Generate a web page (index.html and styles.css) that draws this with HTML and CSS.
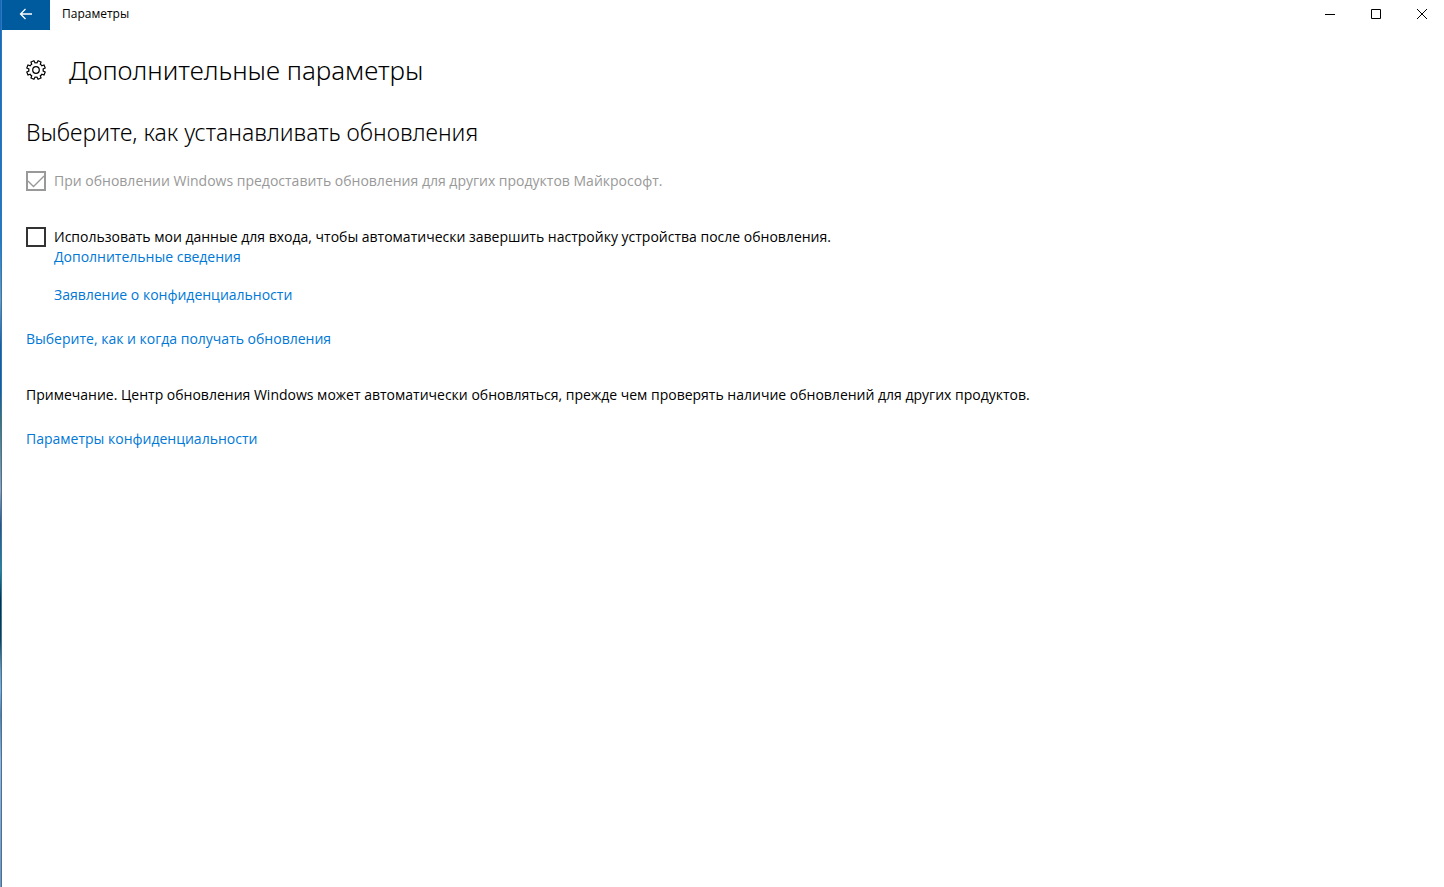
FILE: index.html
```html
<!DOCTYPE html>
<html lang="ru">
<head>
<meta charset="utf-8">
<title>Параметры</title>
<link rel="stylesheet" href="styles.css">
</head>
<body>
<div class="window">
  <header class="titlebar">
    <button class="back" aria-label="Назад">
      <svg width="14" height="12" viewBox="0 0 14 12"><path d="M13 6H1.5M6.5 1L1.500 6l5 5"/></svg>
    </button>
    <span class="app-name">Параметры</span>
    <div class="controls">
      <button aria-label="Свернуть"><svg width="10" height="10" viewBox="0 0 10 10"><path d="M0 5.500H10"/></svg></button>
      <button aria-label="Развернуть"><svg width="10" height="10" viewBox="0 0 10 10"><path d="M.5.5h9v9h-9z"/></svg></button>
      <button aria-label="Закрыть"><svg width="10" height="10" viewBox="0 0 10 10"><path d="M0 0L10 10M10 0L0 10"/></svg></button>
    </div>
  </header>
  <main class="content">
    <div class="page-head">
      <svg class="gear" width="20" height="20" viewBox="-10 -10 20 20"><path d="M-1-7.100Q0-7.400 1-7.100L2.100-9.200 5-8 4.300-5.800Q5.200-5.200 5.800-4.300L8-5 9.200-2.100 7.100-1Q7.400 0 7.100 1L9.200 2.100 8 5 5.800 4.300Q5.200 5.200 4.300 5.800L5 8 2.100 9.200 1 7.100Q0 7.400-1 7.100L-2.100 9.200-5 8-4.300 5.800Q-5.200 5.200-5.800 4.300L-8 5-9.200 2.100-7.100 1Q-7.400 0-7.100-1L-9.200-2.100-8-5-5.800-4.300Q-5.200-5.200-4.300-5.800L-5-8-2.100-9.200Z"/><circle r="3.300"/></svg>
      <h1>Дополнительные параметры</h1>
    </div>
    <h2>Выберите, как устанавливать обновления</h2>
    <label class="option disabled"><input type="checkbox" checked disabled><span>При обновлении Windows предоставить обновления для других продуктов Майкрософт.</span></label>
    <label class="option"><input type="checkbox"><span>Использовать мои данные для входа, чтобы автоматически завершить настройку устройства после обновления.</span></label>
    <div class="sublinks">
      <a href="#">Дополнительные сведения</a>
      <a href="#">Заявление о конфиденциальности</a>
    </div>
    <a class="delivery" href="#">Выберите, как и когда получать обновления</a>
    <p>Примечание. Центр обновления Windows может автоматически обновляться, прежде чем проверять наличие обновлений для других продуктов.</p>
    <a href="#">Параметры конфиденциальности</a>
  </main>
</div>
</body>
</html>
```
FILE: styles.css
```css
* { box-sizing: border-box; }
body {
  margin: 0;
  padding-left: 1px;
  min-height: 100vh;
  background: linear-gradient(#1c66b4 0, #2878bd 240px, #8298a3 300px, #285b91 345px, #24588b 390px, #596d45 420px, #b99c88 490px, #454c60 525px, #348578 570px, #172d20 600px, #293f29 640px, #8d958b 670px, #9eabb6 690px, #77777c 715px, #b5afb2 760px, #958d91 887px);
  color: #000;
  font-family: "Open Sans", "Noto Sans", sans-serif;
  font-size: 14px;
  line-height: 20px;
}
.window {
  min-height: 100vh;
  border-left: 1px solid #2779c4;
  background: #fff;
}
button { border: 0; padding: 0; background: none; display: grid; place-items: center; }
svg { fill: none; stroke: currentColor; }
.titlebar { display: flex; height: 30px; }
.back { width: 48px; height: 30px; padding-bottom: 2px; background: #005a9e; color: #fff; }
.back svg { stroke-width: 1.3; }
.app-name { margin-left: 12px; font-size: 12px; line-height: 28px; }
.controls { display: flex; margin-left: auto; }
.controls button { width: 46px; height: 28px; padding-left: 2px; color: #000; }
.content { padding: 20px 24px; }
.page-head { display: flex; align-items: center; gap: 23px; height: 40px; }
.gear { stroke-width: 1.2; }
h1, h2 { margin: 0; font-family: "Noto Sans", "Open Sans", sans-serif; font-weight: 300; }
h1 { font-size: 26px; line-height: 40px; }
h2 { margin: 26px 0 23px; font-size: 23px; line-height: 32px; }
.option { display: flex; width: fit-content; gap: 8px; margin-bottom: 36px; }
.option + .option { margin-bottom: 0; }
input {
  appearance: none;
  flex: none;
  width: 20px;
  height: 20px;
  margin: 0;
  border: 2px solid #333;
  background: #fff;
}
input:checked {
  background: url("data:image/svg+xml,%3Csvg xmlns='http://www.w3.org/2000/svg' viewBox='0 0 16 16'%3E%3Cpath d='M0 8l5.500 5.500L16 3' fill='none' stroke='%23999' stroke-width='1.300'/%3E%3C/svg%3E");
}
input:disabled { border-color: #999; }
.disabled { color: #999; }
a { display: block; width: fit-content; color: #0078d7; text-decoration: none; }
.sublinks { display: grid; gap: 18px; padding-left: 28px; }
.delivery { margin-top: 24px; }
p { margin: 36px 0 24px; }
```
